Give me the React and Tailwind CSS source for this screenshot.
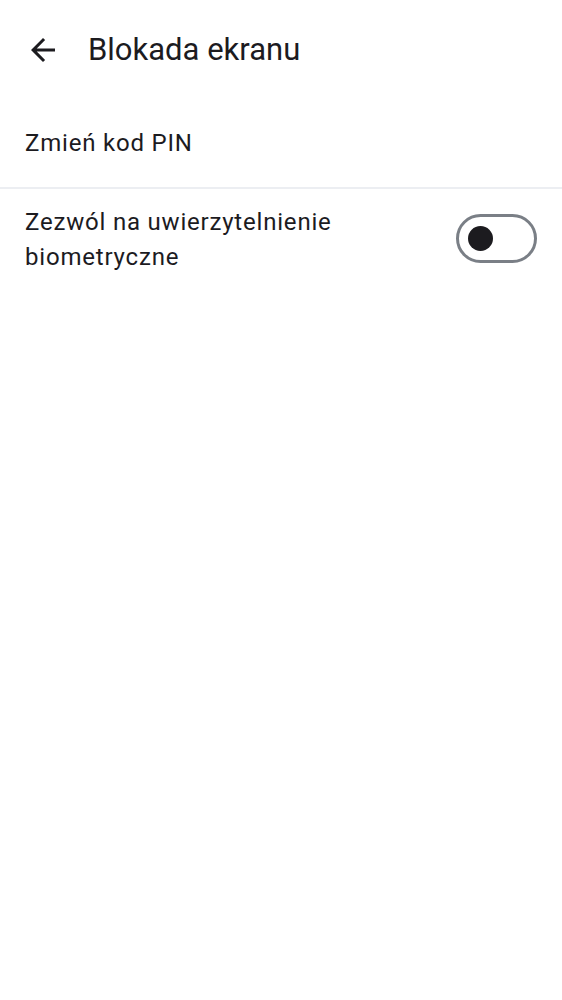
export default function App() {
  return (
    <div className="w-[562px] h-[1000px] bg-white text-[#1c1b1f]" style={{ fontFamily: 'Roboto, "Noto Sans", sans-serif' }}>
      <div className="h-[100px] flex items-center">
        <div className="ml-[25px] w-[36px] h-[36px] -mt-[1px]">
          <svg viewBox="0 0 24 24" width="36" height="36" fill="#1c1b1f">
            <path d="M20 11H7.83l5.59-5.59L12 4l-8 8 8 8 1.41-1.41L7.83 13H20v-2z" />
          </svg>
        </div>
        <div className="ml-[27px] text-[31px] -mt-[1px] leading-none">Blokada ekranu</div>
      </div>
      <div className="h-[87px] flex items-center px-[25px]">
        <div className="text-[24px] leading-[36px] tracking-[0.8px] -mt-[1px]">Zmień kod PIN</div>
      </div>
      <div className="h-[2px] bg-[#eceef2]" />
      <div className="flex items-center justify-between pl-[25px] pr-[25px] pt-[16px]">
        <div className="text-[24px] leading-[35px] tracking-[0.8px]">
          Zezwól na uwierzytelnienie
          <br />
          biometryczne
        </div>
        <div className="w-[81px] h-[49px] rounded-full border-[3px] border-[#7a7f86] flex items-center pl-[9px] -mt-[3px]">
          <div className="w-[25px] h-[25px] rounded-full bg-[#1c1b1f]" />
        </div>
      </div>
    </div>
  );
}
